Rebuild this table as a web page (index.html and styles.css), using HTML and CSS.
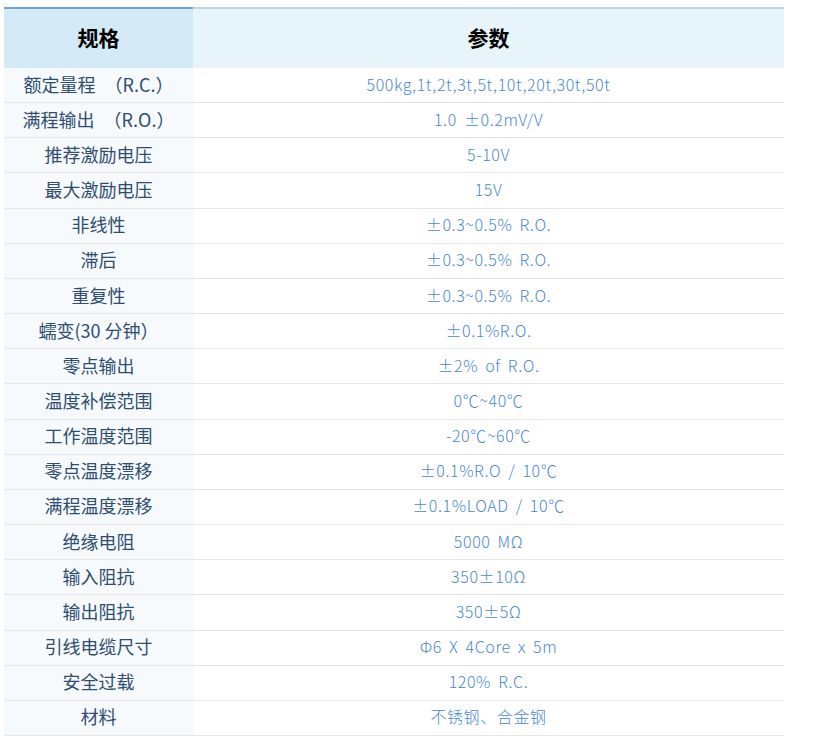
FILE: index.html
```html
<!DOCTYPE html>
<html lang="zh">
<head>
<meta charset="utf-8">
<title>规格参数</title>
<link rel="stylesheet" href="styles.css">
</head>
<body>
<table class="spec">
  <thead>
    <tr><th class="k">规格</th><th class="v">参数</th></tr>
  </thead>
  <tbody>
    <tr><td class="k">额定量程　（R.C.）</td><td class="v">500kg,1t,2t,3t,5t,10t,20t,30t,50t</td></tr>
    <tr><td class="k">满程输出　（R.O.）</td><td class="v">1.0 ±0.2mV/V</td></tr>
    <tr><td class="k">推荐激励电压</td><td class="v">5-10V</td></tr>
    <tr><td class="k">最大激励电压</td><td class="v">15V</td></tr>
    <tr><td class="k">非线性</td><td class="v">±0.3~0.5% R.O.</td></tr>
    <tr><td class="k">滞后</td><td class="v">±0.3~0.5% R.O.</td></tr>
    <tr><td class="k">重复性</td><td class="v">±0.3~0.5% R.O.</td></tr>
    <tr><td class="k">蠕变(30 分钟）</td><td class="v">±0.1%R.O.</td></tr>
    <tr><td class="k">零点输出</td><td class="v">±2% of R.O.</td></tr>
    <tr><td class="k">温度补偿范围</td><td class="v">0℃~40℃</td></tr>
    <tr><td class="k">工作温度范围</td><td class="v">-20℃~60℃</td></tr>
    <tr><td class="k">零点温度漂移</td><td class="v">±0.1%R.O / 10℃</td></tr>
    <tr><td class="k">满程温度漂移</td><td class="v">±0.1%LOAD / 10℃</td></tr>
    <tr><td class="k">绝缘电阻</td><td class="v">5000 MΩ</td></tr>
    <tr><td class="k">输入阻抗</td><td class="v">350±10Ω</td></tr>
    <tr><td class="k">输出阻抗</td><td class="v">350±5Ω</td></tr>
    <tr><td class="k">引线电缆尺寸</td><td class="v">Φ6 X 4Core x 5m</td></tr>
    <tr><td class="k">安全过载</td><td class="v">120% R.C.</td></tr>
    <tr><td class="k">材料</td><td class="v">不锈钢、合金钢</td></tr>
  </tbody>
</table>
</body>
</html>
```
FILE: styles.css
```css
html, body {
  margin: 0;
  padding: 0;
  background: #ffffff;
}
body {
  padding: 7px 0 0 4px;
  font-family: "Noto Sans CJK SC", "Noto Sans", sans-serif;
}
.spec {
  border-collapse: collapse;
  width: 780px;
  table-layout: fixed;
}
.spec th {
  height: 56px;
  padding: 0 0 3px 0;
  font-size: 21px;
  font-weight: bold;
  color: #000000;
  text-align: center;
  vertical-align: middle;
}
.spec th.k {
  width: 189px;
  background: #d4eaf7;
  border-top: 2px solid #6fa7d4;
}
.spec th.v {
  background: #e7f5fb;
  border-top: 2px solid #b9d6ec;
}
.spec td {
  height: 31.17px;
  padding: 0 0 3px 0;
  text-align: center;
  vertical-align: middle;
  border-bottom: 1px solid #e6e6e6;
  white-space: nowrap;
}
.spec td.k {
  background: #f6fafd;
  color: #2f4d70;
  font-size: 18px;
}
.spec td.v {
  background: #ffffff;
  color: #4a88d6;
  font-size: 16px;
  font-weight: 300;
  letter-spacing: 0.6px;
  word-spacing: 3px;
}
```
